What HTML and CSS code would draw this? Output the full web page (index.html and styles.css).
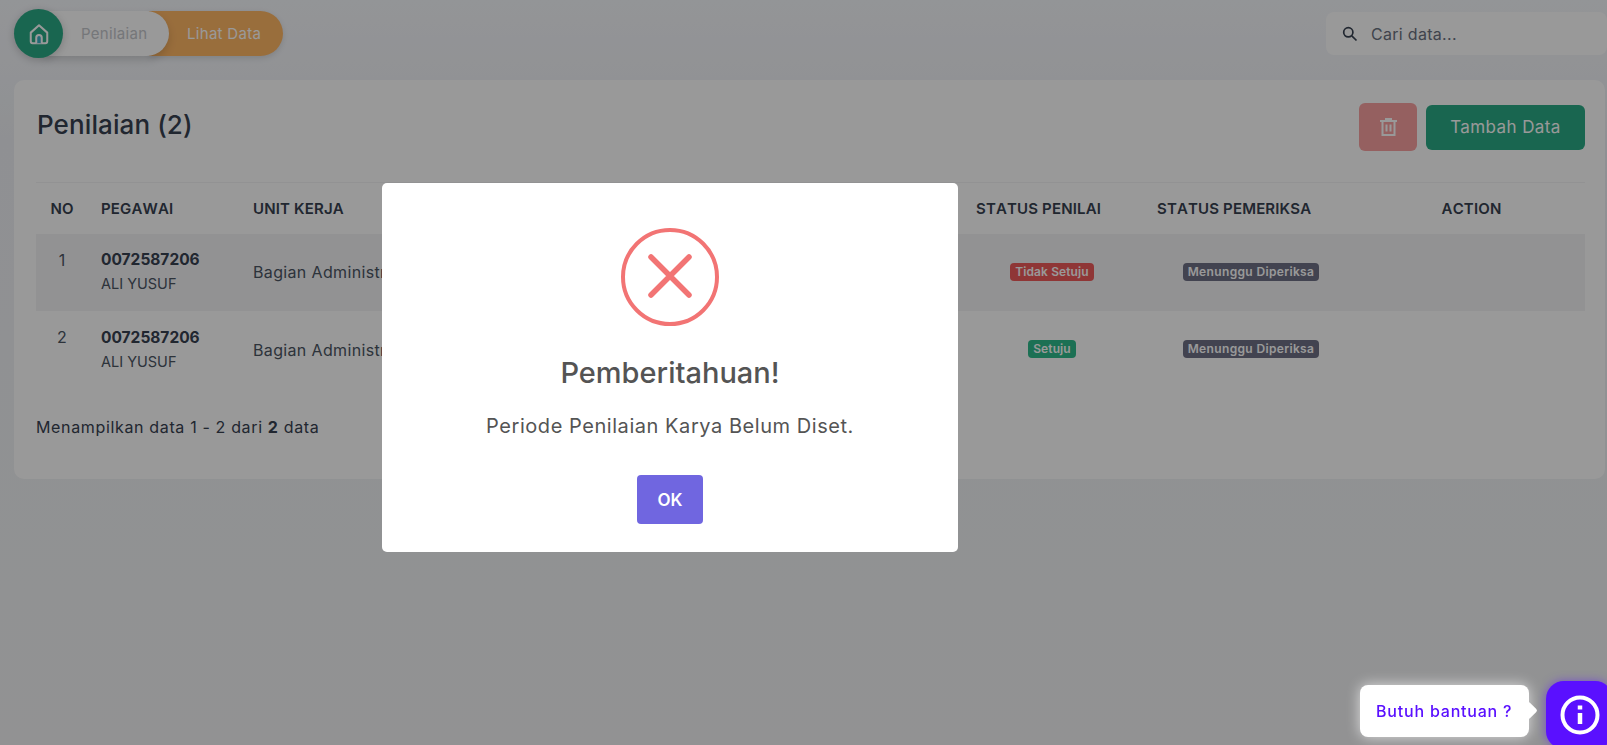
FILE: index.html
```html
<!doctype html>
<html>
  <head>
    <meta charset="utf-8">
    <title>Penilaian</title>
    <meta name="viewport" content="width=device-width, initial-scale=1">
    <link rel="stylesheet" href="styles.css">
  </head>
  <body>
    <header class="topbar">
      <nav class="crumbs">
        <a class="crumb-home">
          <svg width="22" height="22" viewBox="0 0 24 24" fill="none" stroke="#fff" stroke-width="2.200" stroke-linejoin="round">
            <path d="M3 10.500 12 2.500l9 8V20a2 2 0 0 1-2 2H5a2 2 0 0 1-2-2z"/>
            <path d="M9 22v-6a3 3 0 0 1 6 0v6" fill="#3bb0c4"/>
          </svg>
        </a>
        <a class="crumb crumb-active">Penilaian</a>
        <a class="crumb crumb-next">Lihat Data</a>
      </nav>
      <div class="search">
        <svg width="16" height="16" viewBox="0 0 16 16" fill="none" stroke="#374151" stroke-width="1.700">
          <circle cx="6.300" cy="6.300" r="4.600"/>
          <path d="M9.800 9.800 14.500 14.500"/>
        </svg>
        <span>Cari data...</span>
      </div>
    </header>

    <main class="card">
      <div class="card-head">
        <h1>Penilaian (2)</h1>
        <div class="actions">
          <button class="btn-delete">
            <svg width="17" height="18" viewBox="0 0 17 18" fill="none" stroke="#fff" stroke-width="2">
              <path d="M0 3h17M6 3V1h5v2"/>
              <path d="M2.500 3v14h12V3"/>
              <path d="M6.500 6.500v7M10.500 6.500v7"/>
            </svg>
          </button>
          <button class="btn-add">Tambah Data</button>
        </div>
      </div>

      <table class="data">
        <colgroup>
          <col class="col-no">
          <col class="col-pegawai">
          <col class="col-unit">
          <col class="col-penilai">
          <col class="col-pemeriksa">
          <col class="col-action">
        </colgroup>
        <thead>
          <tr>
            <th class="center">NO</th>
            <th>PEGAWAI</th>
            <th>UNIT KERJA</th>
            <th>STATUS PENILAI</th>
            <th>STATUS PEMERIKSA</th>
            <th class="center">ACTION</th>
          </tr>
        </thead>
        <tbody>
          <tr class="striped">
            <td class="center top">1</td>
            <td><b class="nip">0072587206</b><span class="name">ALI YUSUF</span></td>
            <td class="unit">Bagian Administrasi</td>
            <td class="center status"><span class="badge badge-red">Tidak Setuju</span></td>
            <td class="center status-check"><span class="badge badge-dark">Menunggu Diperiksa</span></td>
            <td></td>
          </tr>
          <tr>
            <td class="center top">2</td>
            <td><b class="nip">0072587206</b><span class="name">ALI YUSUF</span></td>
            <td class="unit">Bagian Administrasi</td>
            <td class="center status"><span class="badge badge-green">Setuju</span></td>
            <td class="center status-check"><span class="badge badge-dark">Menunggu Diperiksa</span></td>
            <td></td>
          </tr>
        </tbody>
      </table>

      <p class="summary">Menampilkan data 1 - 2 dari <b>2</b> data</p>
    </main>

    <div class="overlay">
      <div class="modal">
        <svg class="modal-icon" width="98" height="98" viewBox="0 0 98 98" fill="none" stroke="#f27474">
          <circle cx="49" cy="49" r="47" stroke-width="4"/>
          <path d="M30 29 68 67M68 29 30 67" stroke-width="5.500" stroke-linecap="round"/>
        </svg>
        <h2>Pemberitahuan!</h2>
        <p>Periode Penilaian Karya Belum Diset.</p>
        <button class="btn-ok">OK</button>
      </div>
    </div>

    <div class="help">
      <div class="help-tip">Butuh bantuan ?</div>
      <a class="help-btn">
        <svg width="40" height="40" viewBox="0 0 40 40" fill="none" stroke="#fff">
          <circle cx="20" cy="20" r="17.500" stroke-width="4"/>
          <path d="M20 18v11" stroke-width="4.500"/>
          <path d="M20 10.500v4" stroke-width="4.500"/>
        </svg>
      </a>
    </div>
  </body>
</html>
```

FILE: styles.css
```css
* {
  box-sizing: border-box;
}
body {
  margin: 0;
  height: 745px;
  overflow: hidden;
  background: linear-gradient(180deg, #f6f8fc 0, #eff1f5 140px, #f3f4f6 100%);
  font-family: Inter, "Noto Sans", sans-serif;
  font-size: 15px;
  color: #374151;
}
button {
  font-family: inherit;
  border: 0;
}

/* top bar */
.topbar {
  display: flex;
  justify-content: space-between;
  align-items: center;
  height: 80px;
  padding: 0 0 13px 14px;
}
.crumbs {
  display: flex;
  align-items: center;
}
.crumb-home {
  display: flex;
  align-items: center;
  justify-content: center;
  position: relative;
  z-index: 3;
  width: 49px;
  height: 49px;
  border-radius: 50%;
  background-color: #2baa85;
  box-shadow: 0 2px 8px rgba(0, 0, 0, 0.2);
}
.crumb {
  display: flex;
  align-items: center;
  height: 45px;
  border-radius: 0 23px 23px 0;
  font-size: 15px;
  letter-spacing: 0.3px;
}
.crumb-active {
  position: relative;
  z-index: 2;
  width: 125px;
  margin-left: -19px;
  padding-left: 37px;
  background-color: #fff;
  color: #c4c6cb;
  box-shadow: 0 4px 8px rgba(0, 0, 0, 0.15);
}
.crumb-next {
  width: 134px;
  margin-left: -20px;
  padding-left: 38px;
  background-color: #ffb765;
  color: #fff;
  box-shadow: 0 2px 6px rgba(0, 0, 0, 0.12);
}
.search {
  display: flex;
  align-items: center;
  gap: 13px;
  width: 281px;
  height: 43px;
  padding-left: 16px;
  border-radius: 8px;
  background-color: #fff;
  font-size: 16px;
  letter-spacing: 0.3px;
  color: #6b7280;
}

/* card */
.card {
  height: 399px;
  margin: 0 2px 0 14px;
  padding: 23px 20px 0 22px;
  border-radius: 10px;
  background-color: #fff;
}
.card-head {
  display: flex;
  justify-content: space-between;
  height: 79px;
}
.card-head h1 {
  margin: 4px 0 0 1px;
  font-size: 26px;
  line-height: 36px;
  font-weight: 500;
  letter-spacing: 0.1px;
  color: #374151;
}
.actions {
  display: flex;
  align-items: center;
  height: 48px;
  gap: 9px;
}
.btn-delete {
  display: flex;
  align-items: center;
  justify-content: center;
  width: 58px;
  height: 48px;
  border-radius: 6px;
  background-color: #f9a1a1;
}
.btn-add {
  width: 159px;
  height: 45px;
  border-radius: 6px;
  background-color: #2baa85;
  color: #fff;
  font-size: 17px;
  letter-spacing: 0.4px;
}

/* table */
.data {
  width: 100%;
  table-layout: fixed;
  border-collapse: collapse;
  border-top: 1px solid #f3f4f6;
}
.col-no { width: 52px; }
.col-pegawai { width: 152px; }
.col-penilai { width: 181px; }
.col-pemeriksa { width: 214px; }
.col-action { width: 227px; }
.data th {
  height: 51px;
  padding: 0 13px;
  text-align: left;
  font-size: 15px;
  font-weight: 600;
  font-kerning: none;
  letter-spacing: 0.15px;
  color: #374151;
}
.data td {
  height: 77.500px;
  padding: 0 13px;
  font-size: 15px;
  color: #4b5563;
}
.data .center {
  text-align: center;
}
.data .top {
  vertical-align: top;
  padding-top: 16px;
  font-size: 16px;
}
.data .unit {
  font-size: 16px;
  letter-spacing: 0.35px;
}
.data .status {
  padding: 0 16px 3px 13px;
}
.data .status-check {
  padding-bottom: 3px;
}
.striped {
  background-color: #f3f4f6;
}
.nip {
  display: block;
  font-weight: 700;
  font-size: 15.500px;
  line-height: 24px;
  color: #374151;
}
.name {
  display: block;
  font-size: 14.500px;
  line-height: 24px;
}
.badge {
  display: inline-block;
  padding: 0 5px;
  border-radius: 4px;
  font-size: 12px;
  line-height: 18px;
  font-weight: 600;
  letter-spacing: 0.1px;
  color: #fff;
}
.badge-red { background-color: #ef5a5a; }
.badge-green { background-color: #2fbb8c; }
.badge-dark {
  background-color: #6e7086;
  letter-spacing: 0.35px;
}
.summary {
  margin: 26px 0 0;
  line-height: 24px;
  font-size: 16px;
  letter-spacing: 0.65px;
}

/* modal */
.overlay {
  position: fixed;
  z-index: 10;
  top: 0;
  left: 0;
  right: 0;
  bottom: 0;
  display: flex;
  align-items: center;
  justify-content: center;
  padding: 0 267px 10px 0;
  background-color: rgba(0, 0, 0, 0.4);
}
.modal {
  display: flex;
  flex-direction: column;
  align-items: center;
  width: 576px;
  height: 369px;
  padding-top: 45px;
  border-radius: 5px;
  background-color: #fff;
  color: #545454;
}
.modal h2 {
  margin: 29px 0 0;
  font-size: 29px;
  line-height: 36px;
  font-weight: 500;
}
.modal p {
  margin: 22px 0 0;
  font-size: 20px;
  line-height: 27px;
  letter-spacing: 0.55px;
}
.btn-ok {
  width: 66px;
  height: 49px;
  margin-top: 35px;
  border-radius: 4px;
  background-color: #7066e0;
  color: #fff;
  font-size: 17px;
  font-weight: 600;
}

/* help widget */
.help {
  position: fixed;
  z-index: 20;
  right: -6px;
  bottom: -4px;
  display: flex;
  align-items: flex-start;
  gap: 17px;
}
.help-tip {
  position: relative;
  width: 169px;
  height: 52px;
  margin-top: 4px;
  padding-left: 16px;
  border-radius: 8px;
  background-color: #fff;
  box-shadow: 0 0 14px rgba(255, 255, 255, 0.7);
  color: #5a10ff;
  font-size: 16px;
  font-weight: 500;
  letter-spacing: 0.8px;
  line-height: 52px;
}
.help-tip::after {
  content: "";
  position: absolute;
  top: 19px;
  right: -6px;
  width: 13px;
  height: 13px;
  border-radius: 2px;
  background-color: #fff;
  transform: rotate(45deg);
}
.help-btn {
  display: flex;
  align-items: center;
  justify-content: center;
  width: 67px;
  height: 68px;
  border-radius: 18px;
  background-color: #5a10ff;
  box-shadow: 0 0 10px rgba(90, 16, 255, 0.5);
}
```
